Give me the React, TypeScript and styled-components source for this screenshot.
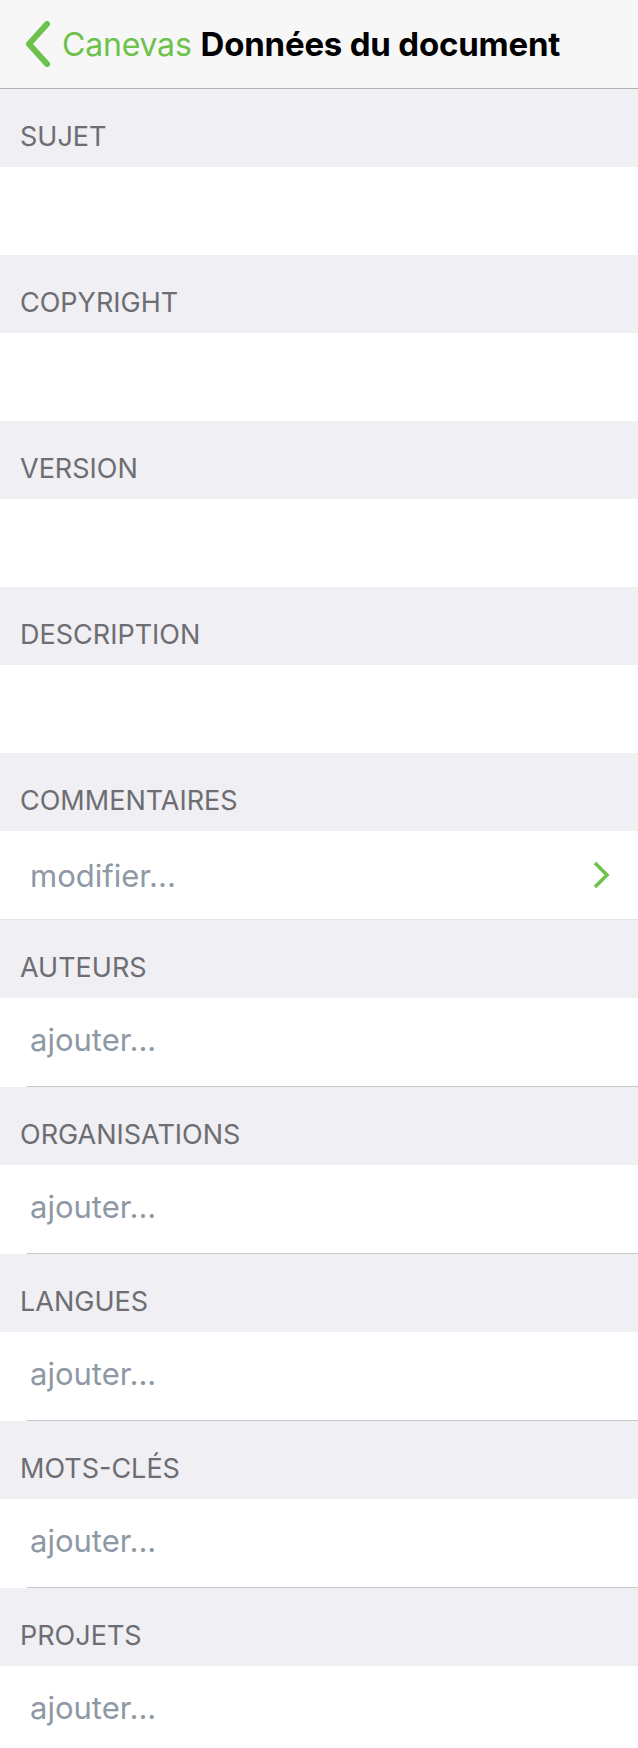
import styled, {createGlobalStyle} from 'styled-components';

const GlobalStyle = createGlobalStyle`
	html, body {
		margin: 0;
		padding: 0;
		background: #efeff4;
	}
	body {
		font-family: Inter, 'Noto Sans', 'Liberation Sans', sans-serif;
		-webkit-font-smoothing: antialiased;
	}
`;

const Page = styled.div`
	width: 638px;
	height: 1748px;
	overflow: hidden;
	background: #efeff4;
`;

const NavBar = styled.header`
	height: 88px;
	display: flex;
	align-items: center;
	background: #f7f7f8;
	border-bottom: 1px solid #b2b2b2;
	padding-left: 24px;
	box-sizing: content-box;
`;

const BackButton = styled.button`
	display: flex;
	align-items: center;
	gap: 12px;
	padding: 0;
	border: 0;
	background: none;
	color: #6cc24a;
	font: inherit;
	font-size: 32px;
	letter-spacing: -0.2px;
	cursor: pointer;
`;

const Title = styled.h1`
	margin: 0 0 0 9px;
	font-size: 33px;
	font-weight: 700;
	color: #000;
	letter-spacing: -0.2px;
`;

const SectionHeader = styled.div`
	height: 78px;
	box-sizing: border-box;
	padding: 31px 0 0 20px;
	font-size: 27px;
	line-height: 34px;
	color: #6d6d72;
	text-transform: uppercase;
`;

const Row = styled.div<{$separator?: 'full' | 'inset'}>`
	position: relative;
	height: 88px;
	box-sizing: content-box;
	display: flex;
	align-items: center;
	justify-content: space-between;
	padding: 0 28px 0 30px;
	background: #fff;
	border-bottom: ${p => (p.$separator ? '1px solid #fff' : '0')};

	&::after {
		content: '';
		display: ${p => (p.$separator ? 'block' : 'none')};
		position: absolute;
		bottom: -1px;
		right: 0;
		left: ${p => (p.$separator === 'inset' ? '27px' : '0')};
		height: 1px;
		background: ${p => (p.$separator === 'inset' ? '#c8c7cc' : '#e3e3e8')};
	}
`;

const Placeholder = styled.span<{$raised?: boolean}>`
	font-size: 31px;
	color: #8e99a5;
	padding-bottom: ${p => (p.$raised ? '6px' : '0')};
`;

const BackChevron = () => (
	<svg width='26' height='46' viewBox='0 0 26 46' fill='none'>
		<path d='M23 3 L5 23 L23 43' stroke='#6cc24a' strokeWidth='6' strokeLinecap='round' strokeLinejoin='round'/>
	</svg>
);

const Disclosure = () => (
	<svg width='18' height='28' viewBox='0 0 18 28' fill='none'>
		<path d='M3 2 L15 14 L3 26' stroke='#6cc24a' strokeWidth='3.5'/>
	</svg>
);

type Section = {
	readonly label: string;
	readonly value?: string;
	readonly disclosure?: boolean;
};

const sections: Section[] = [
	{label: 'Sujet'},
	{label: 'Copyright'},
	{label: 'Version'},
	{label: 'Description'},
	{label: 'Commentaires', value: 'modifier...', disclosure: true},
	{label: 'Auteurs', value: 'ajouter...'},
	{label: 'Organisations', value: 'ajouter...'},
	{label: 'Langues', value: 'ajouter...'},
	{label: 'Mots-clés', value: 'ajouter...'},
	{label: 'Projets', value: 'ajouter...'},
];

export default function App() {
	return (
		<Page>
			<GlobalStyle/>
			<NavBar>
				<BackButton>
					<BackChevron/>
					Canevas
				</BackButton>
				<Title>Données du document</Title>
			</NavBar>
			{sections.map((s, i) => {
				const last = i === sections.length - 1;
				const separator = s.disclosure ? 'full' : s.value && !last ? 'inset' : undefined;
				return (
					<div key={s.label}>
						<SectionHeader>{s.label}</SectionHeader>
						<Row $separator={separator}>
							{s.value && <Placeholder $raised={!s.disclosure}>{s.value}</Placeholder>}
							{s.disclosure && <Disclosure/>}
						</Row>
					</div>
				);
			})}
		</Page>
	);
}
